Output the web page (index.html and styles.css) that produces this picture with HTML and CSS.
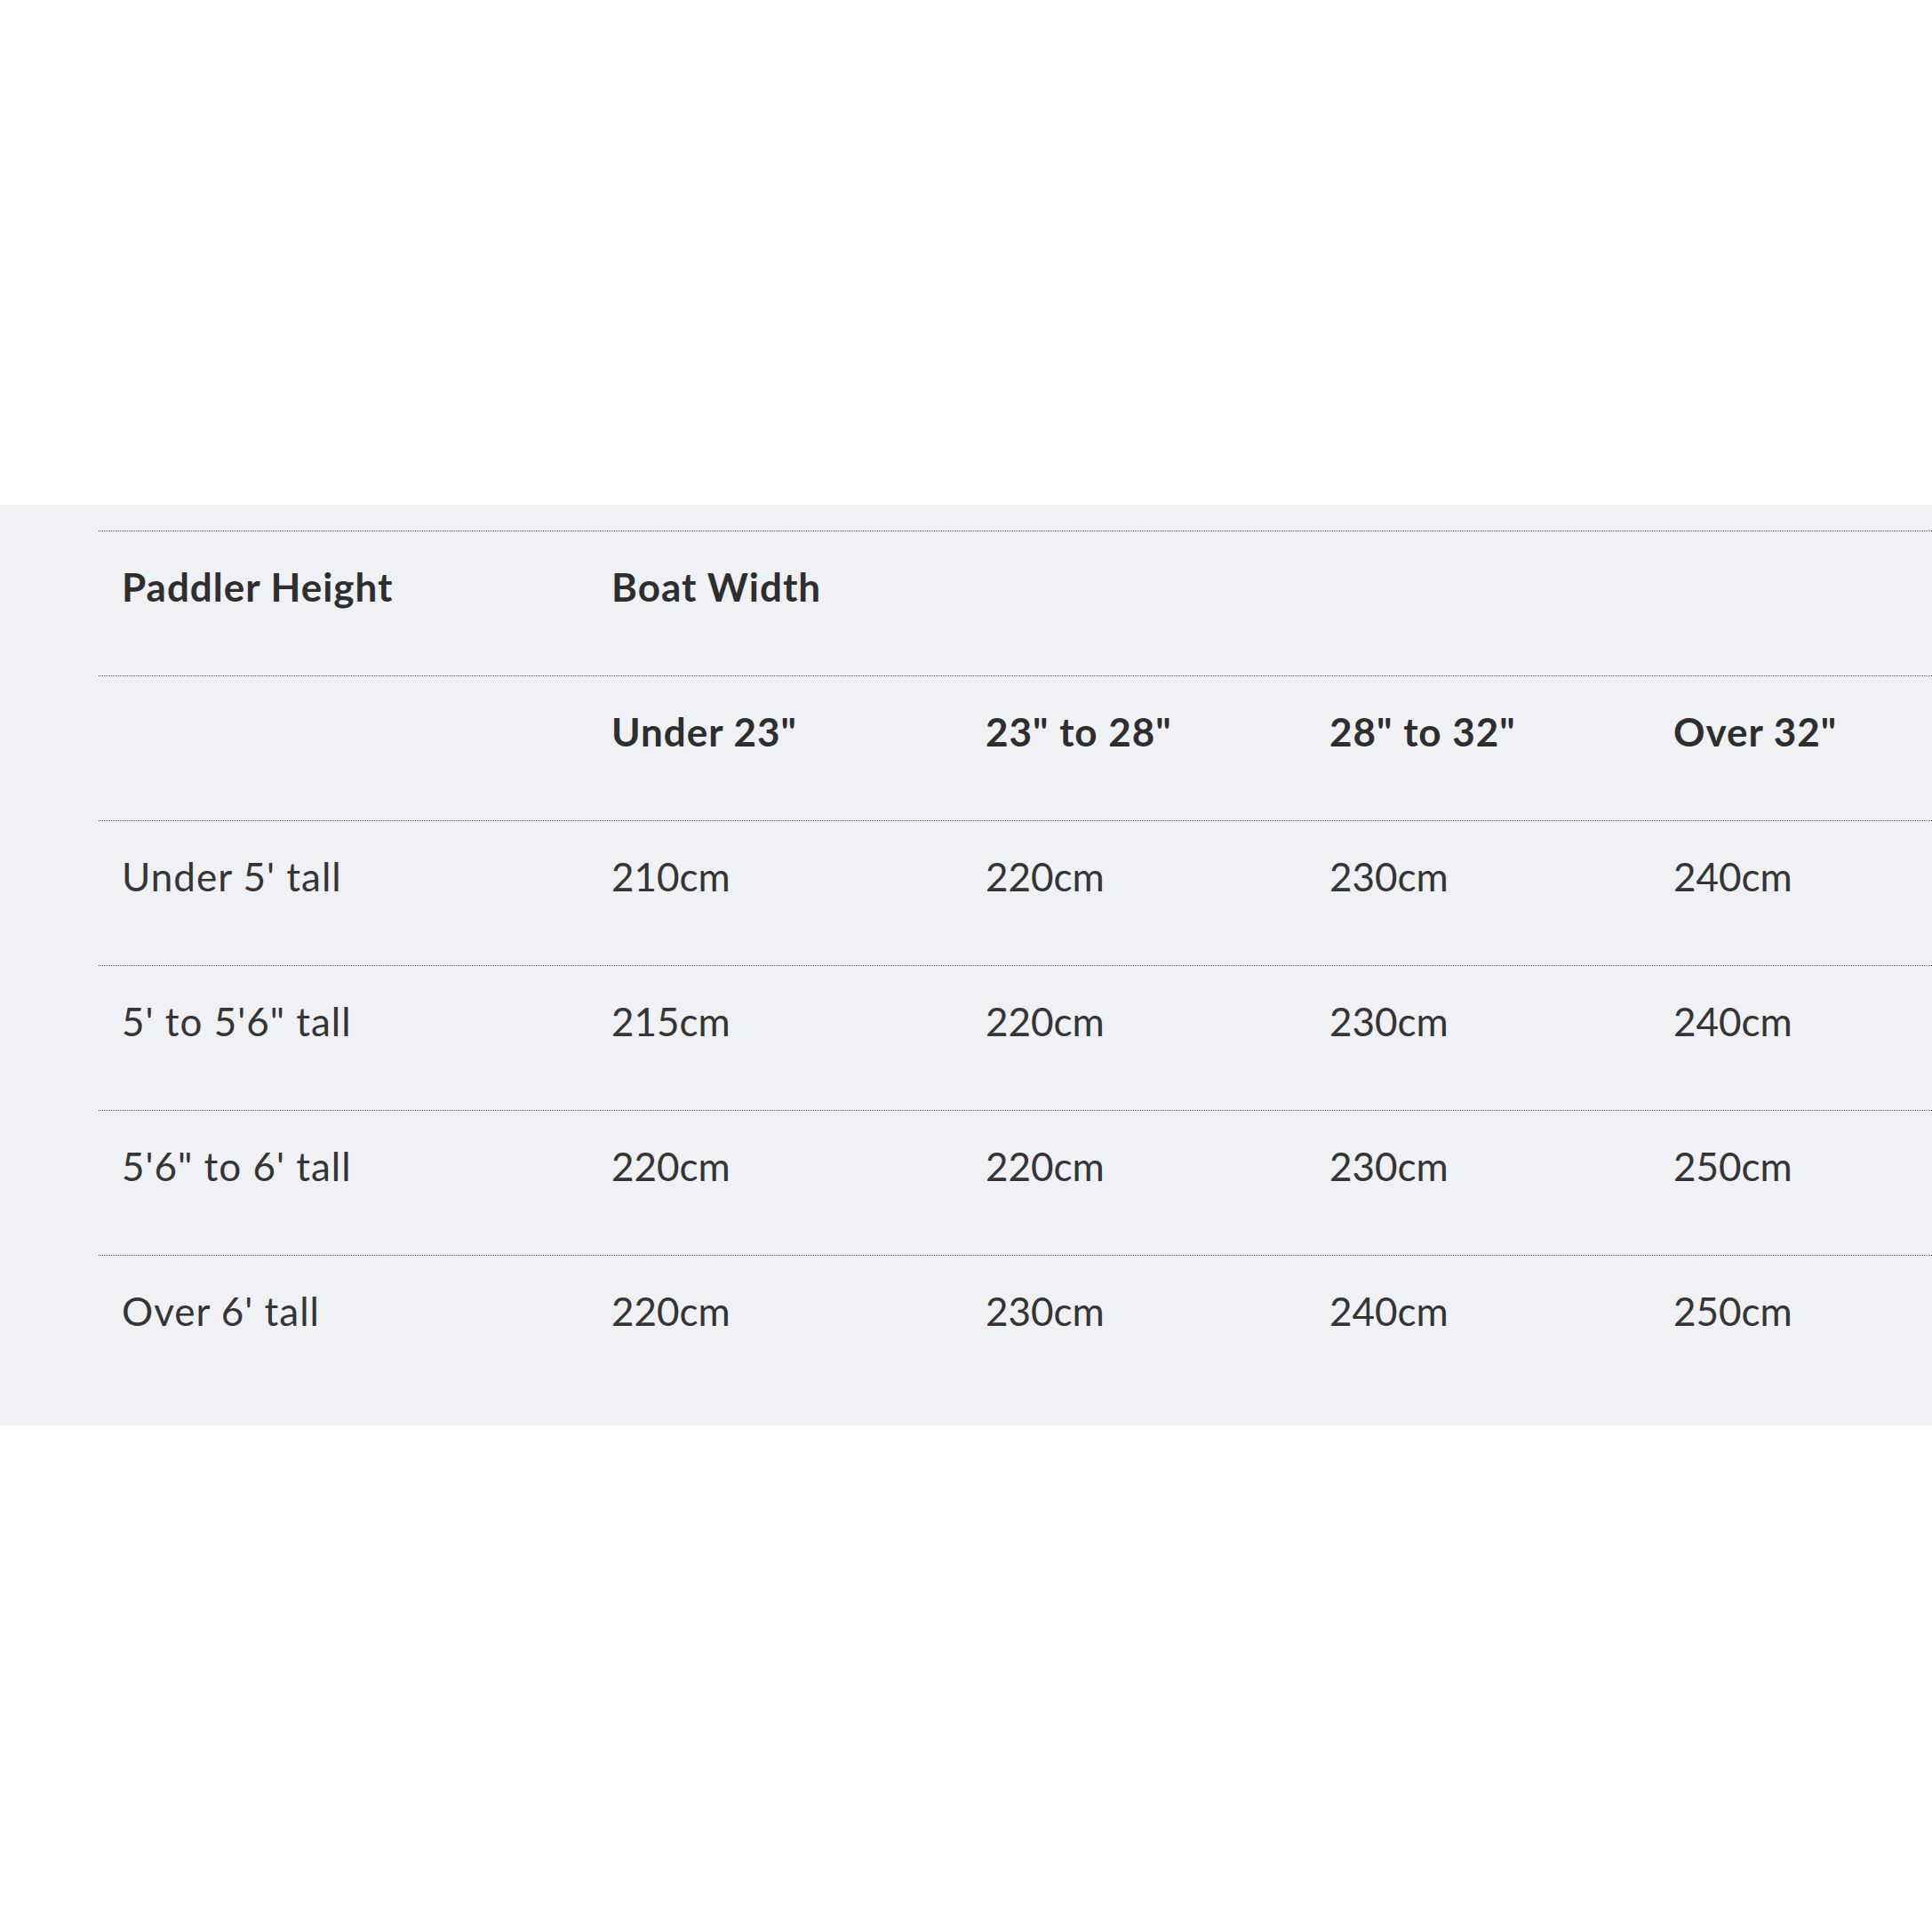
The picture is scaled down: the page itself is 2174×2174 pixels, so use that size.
FILE: index.html
```html
<!DOCTYPE html>
<html>
<head>
<meta charset="utf-8">
<link rel="stylesheet" href="styles.css">
</head>
<body>
<div class="band">
  <div class="chart">
    <div class="row head">
      <div class="cell">Paddler Height</div>
      <div class="cell">Boat Width</div>
      <div class="cell"></div>
      <div class="cell"></div>
      <div class="cell"></div>
    </div>
    <div class="row head">
      <div class="cell"></div>
      <div class="cell">Under 23"</div>
      <div class="cell">23" to 28"</div>
      <div class="cell">28" to 32"</div>
      <div class="cell">Over 32"</div>
    </div>
    <div class="row">
      <div class="cell label">Under 5' tall</div>
      <div class="cell">210cm</div>
      <div class="cell">220cm</div>
      <div class="cell">230cm</div>
      <div class="cell">240cm</div>
    </div>
    <div class="row">
      <div class="cell label">5' to 5'6" tall</div>
      <div class="cell">215cm</div>
      <div class="cell">220cm</div>
      <div class="cell">230cm</div>
      <div class="cell">240cm</div>
    </div>
    <div class="row">
      <div class="cell label">5'6" to 6' tall</div>
      <div class="cell">220cm</div>
      <div class="cell">220cm</div>
      <div class="cell">230cm</div>
      <div class="cell">250cm</div>
    </div>
    <div class="row">
      <div class="cell label">Over 6' tall</div>
      <div class="cell">220cm</div>
      <div class="cell">230cm</div>
      <div class="cell">240cm</div>
      <div class="cell">250cm</div>
    </div>
  </div>
</div>
</body>
</html>
```
FILE: styles.css
```css
html, body {
  margin: 0;
  padding: 0;
  background: #ffffff;
}
body {
  font-family: "Lato", "Liberation Sans", sans-serif;
  color: #353535;
}
.band {
  margin-top: 568px;
  height: 1036px;
  box-sizing: border-box;
  background: #eff1f4;
  padding: 29px 0 0 111px;
}
.chart {
  display: flex;
  flex-direction: column;
}
.row {
  display: grid;
  grid-template-columns: 551px 421px 387px 387px 1fr;
  height: 163px;
  box-sizing: border-box;
  border-top: 1px dotted #5e5e5e;
}
.cell {
  padding: 40px 0 0 26px;
  font-size: 44px;
  line-height: 44px;
  white-space: nowrap;
}
.label {
  letter-spacing: 1px;
}
.head .cell {
  font-weight: 700;
  color: #2e2e2e;
  letter-spacing: 1px;
}
```
